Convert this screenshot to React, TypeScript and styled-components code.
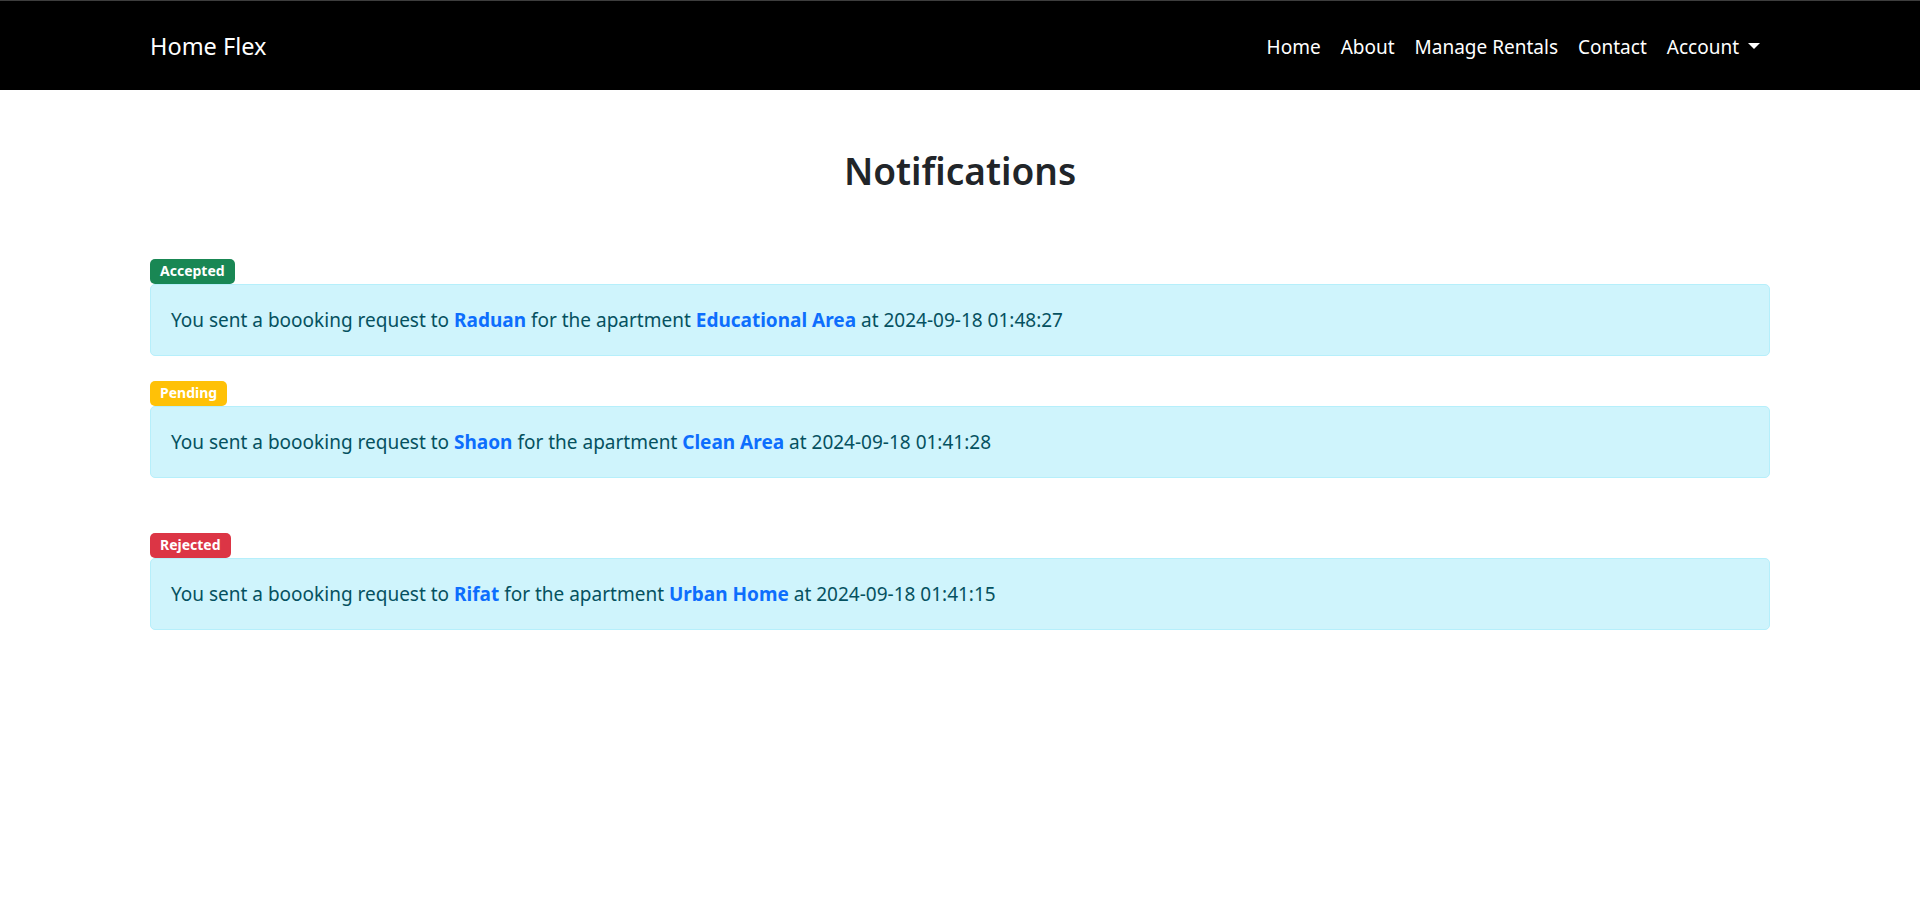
import React from "react";
import styled, { createGlobalStyle } from "styled-components";

const Global = createGlobalStyle`
  * { box-sizing: border-box; }
  html, body { margin: 0; padding: 0; background: #fff; }
  body {
    font-family: "Segoe UI", "Noto Sans", "Open Sans", sans-serif;
    font-size: 19px;
    line-height: 1.5;
    color: #212529;
  }
`;

const NavBar = styled.nav`
  height: 90px;
  background: #000;
  border-top: 1px solid #3d3d3d;
  display: flex;
  align-items: center;
`;

const Container = styled.div`
  width: 100%;
  max-width: 1620px;
  margin: 0 auto;
`;

const NavInner = styled(Container)`
  display: flex;
  align-items: center;
  justify-content: space-between;
`;

const Brand = styled.a`
  color: #fff;
  font-size: 23.5px;
  line-height: 1.5;
  text-decoration: none;
  padding: 7px 0 5px;
`;

const NavList = styled.ul`
  list-style: none;
  margin: 0;
  padding: 0;
  display: flex;
  align-items: center;
`;

const NavLink = styled.a<{ $dropdown?: boolean }>`
  display: block;
  color: #fff;
  font-size: 19px;
  line-height: 30px;
  padding: 11px 10px 9px;
  text-decoration: none;
  ${(p) =>
    p.$dropdown
      ? `&::after {
    content: "";
    display: inline-block;
    margin-left: 9px;
    vertical-align: 5px;
    border-top: 6px solid #fff;
    border-left: 6px solid transparent;
    border-right: 6px solid transparent;
  }`
      : ""}
`;

const Main = styled(Container)`
  padding-bottom: 40px;
`;

const Title = styled.h2`
  text-align: center;
  font-size: 37px;
  font-weight: 600;
  line-height: 48px;
  margin: 57px 0 64px;
  color: #212529;
`;

const Item = styled.div<{ $gapBefore?: boolean }>`
  margin-top: ${(p) => (p.$gapBefore ? "55px" : "25px")};
  &:first-of-type {
    margin-top: 0;
  }
`;

const Badge = styled.span<{ $bg: string }>`
  display: inline-block;
  background: ${(p) => p.$bg};
  color: #fff;
  font-size: 14px;
  font-weight: 700;
  line-height: 1;
  padding: 5px 10px 5px;
  height: 25px;
  border-radius: 5px;
  vertical-align: top;
`;

const BadgeRow = styled.div`
  height: 25px;
  display: flex;
`;

const Alert = styled.div`
  background: #cff4fc;
  border: 1px solid #b6effb;
  border-radius: 5px;
  color: #055160;
  padding: 20px 20px;
  font-size: 19px;
  line-height: 30px;
`;

const Strong = styled.a`
  color: #0d6efd;
  font-weight: 700;
  text-decoration: none;
`;

const items = [
  { status: "Accepted", bg: "#198754", to: "Raduan", apt: "Educational Area", at: "2024-09-18 01:48:27", gap: false },
  { status: "Pending", bg: "#ffc107", to: "Shaon", apt: "Clean Area", at: "2024-09-18 01:41:28", gap: false },
  { status: "Rejected", bg: "#dc3545", to: "Rifat", apt: "Urban Home", at: "2024-09-18 01:41:15", gap: true },
];

export default function App() {
  return (
    <>
      <Global />
      <NavBar>
        <NavInner>
          <Brand href="#">Home Flex</Brand>
          <NavList>
            <li><NavLink href="#">Home</NavLink></li>
            <li><NavLink href="#">About</NavLink></li>
            <li><NavLink href="#">Manage Rentals</NavLink></li>
            <li><NavLink href="#">Contact</NavLink></li>
            <li><NavLink href="#" $dropdown>Account</NavLink></li>
          </NavList>
        </NavInner>
      </NavBar>
      <Main>
        <Title>Notifications</Title>
        {items.map((it) => (
          <Item key={it.to} $gapBefore={it.gap}>
            <BadgeRow>
              <Badge $bg={it.bg}>{it.status}</Badge>
            </BadgeRow>
            <Alert>
              You sent a boooking request to <Strong href="#">{it.to}</Strong> for the apartment{" "}
              <Strong href="#">{it.apt}</Strong> at {it.at}
            </Alert>
          </Item>
        ))}
      </Main>
    </>
  );
}
